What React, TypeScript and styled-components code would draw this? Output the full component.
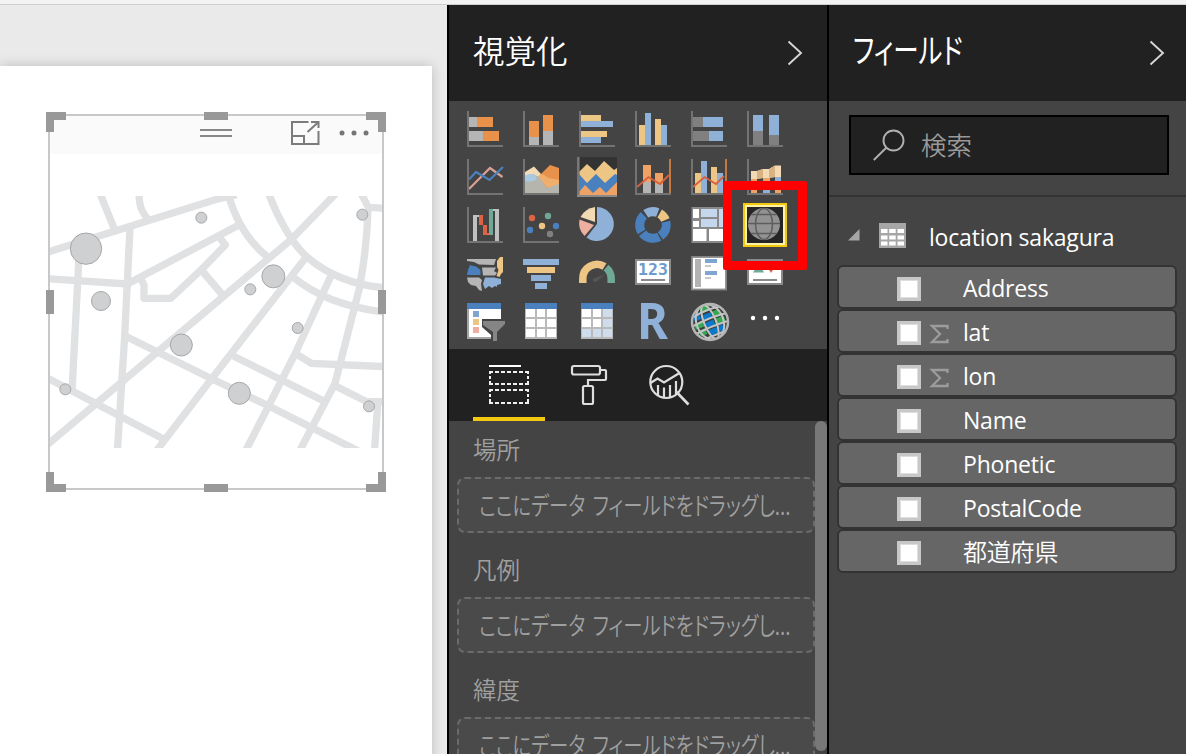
import React from "react";
import styled, { createGlobalStyle } from "styled-components";

const GlobalStyle = createGlobalStyle`
  * { box-sizing: border-box; }
  html, body { margin: 0; padding: 0; }
  body {
    width: 1186px;
    height: 754px;
    overflow: hidden;
    background: #eaeaea;
    font-family: "Open Sans", "Noto Sans CJK JP", sans-serif;
  }
  svg { display: block; overflow: visible; }
`;

const Shell = styled.div`
  display: flex;
  flex-direction: column;
  width: 1186px;
  height: 754px;
  overflow: hidden;
`;

const TopStrip = styled.div`
  flex: none;
  height: 5px;
  background: #f3f3f3;
  border-bottom: 1px solid #cfcfcf;
`;

const Main = styled.div`
  flex: 1;
  display: flex;
  min-height: 0;
`;

/* ---------- report canvas ---------- */

const CanvasArea = styled.div`
  width: 447px;
  flex: none;
  padding-top: 61px;
  background: #eaeaea;
  overflow: hidden;
`;

const ReportPage = styled.div`
  width: 432px;
  height: 720px;
  padding: 48px 0 0 48px;
  background: #fff;
  box-shadow: 0 0 12px rgba(0, 0, 0, 0.2);
`;

const Visual = styled.div`
  position: relative;
  width: 336px;
  height: 376px;
  border: 2px solid #c8c8c8;
  display: flex;
  flex-direction: column;
`;

const VisualHeader = styled.div`
  height: 38px;
  padding: 4px 0 0 150px;
  display: flex;
  align-items: flex-start;
  background: #fafafa;
`;

const Grip = styled.div`
  flex: none;
  width: 32px;
  height: 8px;
  margin: 9px 59px 0 0;
  border: solid #888;
  border-width: 2px 0;
`;

const MapArea = styled.div`
  margin-top: 42px;
  height: 252px;
  overflow: hidden;
`;

type HandlePos = { $v: "top" | "mid" | "bottom"; $h: "left" | "mid" | "right" };

const Handle = styled.div<HandlePos>`
  position: absolute;
  ${({ $v }) => ($v === "top" ? "top: -4px;" : $v === "bottom" ? "bottom: -4px;" : "top: 174px;")}
  ${({ $h }) => ($h === "left" ? "left: -4px;" : $h === "right" ? "right: -4px;" : "left: 154px;")}
  ${({ $v, $h }) =>
    $v === "mid"
      ? "width: 8px; height: 24px; background: #999;"
      : $h === "mid"
      ? "width: 24px; height: 8px; background: #999;"
      : `width: 20px; height: 20px; border: 0 solid #999; border-${$v}-width: 8px; border-${$h}-width: 8px;`}
`;

/* ---------- panes ---------- */

const Pane = styled.section<{ $width: number }>`
  flex: none;
  width: ${(p) => p.$width}px;
  border-left: 2px solid #000;
  background: #444;
  display: flex;
  flex-direction: column;
  overflow: hidden;
`;

const PaneHeader = styled.header<{ $right?: number }>`
  flex: none;
  height: 96px;
  padding: 0 ${(p) => p.$right ?? 21}px 4px 24px;
  display: flex;
  align-items: center;
  justify-content: space-between;
  background: #212121;
  color: #fff;
`;

const PaneTitle = styled.h2<{ $kana?: boolean }>`
  margin: 0;
  padding-bottom: 4px;
  font: 400 ${(p) => (p.$kana ? 34 : 32)}px/44px "Noto Sans CJK JP", sans-serif;
  font-weight: ${(p) => (p.$kana ? 400 : 350)};
  font-feature-settings: ${(p) => (p.$kana ? '"palt"' : "normal")};
  white-space: nowrap;
  transform: scaleX(${(p) => (p.$kana ? 0.75 : 0.985)});
  transform-origin: left;
`;

const ChevronBox = styled.div`
  padding-top: 4px;
`;

const VisualGrid = styled.div`
  flex: none;
  height: 248px;
  padding: 6px 0 0 14px;
  display: grid;
  grid-template-columns: repeat(6, 44px);
  grid-auto-rows: 44px;
  gap: 4px 12px;
  align-content: start;
`;

const VisualCell = styled.div`
  position: relative;
  padding: 2px;
`;

const SelectedFrame = styled.div`
  margin: -2px;
  width: 44px;
  height: 44px;
  border: 2px solid #f2c811;
  box-shadow: inset 0 0 0 2px #fff3a3;
  background: #252525;
`;

const RedMark = styled.div`
  position: absolute;
  z-index: 2;
  left: -20px;
  top: -22px;
  width: 84px;
  height: 89px;
  border: 9px solid #f00;
  border-radius: 2px;
`;

const Tabs = styled.div`
  flex: none;
  height: 72px;
  padding-left: 24px;
  display: flex;
  gap: 8px;
  background: #212121;
`;

const Tab = styled.div<{ $active?: boolean }>`
  width: 72px;
  padding-top: 16px;
  display: flex;
  justify-content: center;
  align-items: flex-start;
  border-bottom: 4px solid ${(p) => (p.$active ? "#f2c811" : "transparent")};
`;

const WellsArea = styled.div`
  flex: 1;
  min-height: 0;
  display: flex;
`;

const Wells = styled.div`
  width: 366px;
  padding-left: 8px;
  overflow: hidden;
`;

const Well = styled.div`
  height: 120px;
`;

const WellLabel = styled.div`
  height: 56px;
  padding-left: 16px;
  font: 350 23.5px/57px "Noto Sans CJK JP", sans-serif;
  color: #a0a0a0;
`;

const DropZone = styled.div`
  width: 358px;
  height: 56px;
  padding-left: 20px;
  border: 2px dashed #6b6b6b;
  border-radius: 8px;
  background: #4a4a4a;
`;

const DropText = styled.span`
  display: inline-block;
  font: 350 25px/50px "Noto Sans CJK JP", sans-serif;
  font-feature-settings: "palt";
  word-spacing: 4px;
  color: #a0a0a0;
  white-space: nowrap;
  transform: scaleX(0.774);
  transform-origin: left;
`;

const ScrollThumb = styled.div`
  width: 12px;
  height: 330px;
  border-radius: 6px;
  background: #787878;
`;

/* ---------- fields pane ---------- */

const SearchArea = styled.div`
  flex: none;
  height: 96px;
  padding: 14px 17px 0 20px;
  border-bottom: 2px solid #333;
`;

const SearchBox = styled.div`
  height: 60px;
  padding-left: 22px;
  display: flex;
  align-items: center;
  gap: 16px;
  border: 2px solid #000;
  background: #212121;
  color: #999;
`;

const SearchHint = styled.span`
  padding-bottom: 3px;
  font: 350 25.5px/50px "Noto Sans CJK JP", sans-serif;
`;

const TableRow = styled.div`
  flex: none;
  height: 68px;
  padding: 12px 0 0 19px;
  display: flex;
  align-items: center;
  color: #fff;
`;

const TableIconBox = styled.div`
  margin: 0 23px 0 19px;
  padding-bottom: 4px;
`;

const TriangleBox = styled.div`
  padding-bottom: 5px;
`;

const Latin = styled.span<{ $drop?: number; $cjk?: boolean }>`
  padding-top: ${(p) => p.$drop ?? 0}px;
  font: 400 ${(p) => (p.$cjk ? 24 : 23)}px/38px "Open Sans", "Noto Sans CJK JP", sans-serif;
  font-weight: ${(p) => (p.$cjk ? 350 : 400)};
  letter-spacing: -0.2px;
  white-space: nowrap;
`;

const FieldList = styled.div`
  padding: 0 9px 0 8px;
`;

const FieldRow = styled.div`
  height: 44px;
  padding-left: 58px;
  display: flex;
  align-items: center;
  border: 2px solid #333;
  border-radius: 6px;
  background: #666;
  color: #fff;
`;

const CheckBox = styled.span`
  width: 24px;
  height: 24px;
  margin-top: 4px;
  border: 3px solid #c8c8c8;
  background: #fff;
  box-shadow: inset 0 0 0 1px #dedede;
`;

const SigmaSlot = styled.span`
  width: 42px;
  padding: 6px 0 0 9px;
`;

/* ---------- icon drawings ---------- */

const O = "#e8914a";
const B = "#8fb1d8";
const DB = "#4a80bd";
const Y = "#edc584";
const G = "#b5b5b5";
const CR = "#f2dab4";

type Bar = [number, number, number, number, string];

const Bars = ({ items }: { items: Bar[] }) => (
  <>
    {items.map(([x1, y1, x2, y2, c], i) => (
      <rect key={i} x={x1} y={y1} width={x2 - x1} height={y2 - y1} fill={c} />
    ))}
  </>
);

const Axis = () => <path d="M3 2V37H38" fill="none" stroke="#737373" strokeWidth="2" />;

const Icon = ({ children }: { children: React.ReactNode }) => (
  <svg width="40" height="40" viewBox="0 0 40 40">
    {children}
  </svg>
);

const BarIcon = ({ items, children }: { items: Bar[]; children?: React.ReactNode }) => (
  <Icon>
    <Bars items={items} />
    {children}
    <Axis />
  </Icon>
);

const ring = (a0: number, a1: number, r = 13.3, cx = 20, cy = 20) => {
  const p = (a: number) => {
    const t = (a * Math.PI) / 180;
    return `${(cx + r * Math.sin(t)).toFixed(2)} ${(cy - r * Math.cos(t)).toFixed(2)}`;
  };
  return `M${p(a0)}A${r} ${r} 0 ${a1 - a0 > 180 ? 1 : 0} 1 ${p(a1)}`;
};

const TableGrid = ({ tint }: { tint?: boolean }) => {
  const cells: Bar[] = [];
  const ys = [[8, 16], [18, 26], [28, 36]];
  const xs = [[5, 14], [16, 24], [26, 35]];
  ys.forEach(([y1, y2], r) =>
    xs.forEach(([x1, x2], c) =>
      cells.push([x1, y1, x2, y2, tint && (c === 2 || r === 2) ? "#cfdcec" : "#fff"])
    )
  );
  return (
    <Icon>
      <rect x="4" y="2" width="32" height="36" fill="#b9b9b9" />
      <Bars items={cells} />
      <rect x="4" y="2" width="32" height="6" fill={DB} />
    </Icon>
  );
};

const GrayGlobe = () => (
  <svg width="40" height="40" viewBox="-2 -2 40 40">
    <circle cx="17" cy="17" r="16" fill="#929292" />
    <g fill="none" stroke="#5d5d5d" strokeWidth="1.500">
      <path d="M4 7.500H30M1 16.500H33M4 26.500H30" />
      <ellipse cx="17" cy="17" rx="8.500" ry="15.500" />
    </g>
  </svg>
);

const icons: React.ReactNode[] = [
  <BarIcon items={[[4, 8, 12, 18, G], [12, 8, 28, 18, O], [4, 22, 18, 32, G], [18, 22, 34, 32, O]]} />,
  <BarIcon items={[[8, 12, 18, 28, O], [8, 28, 18, 36, G], [22, 6, 32, 22, O], [22, 22, 32, 36, G]]} />,
  <BarIcon items={[[4, 6, 24, 12, Y], [4, 12, 36, 18, B], [4, 22, 30, 28, Y], [4, 28, 24, 34, B]]} />,
  <BarIcon items={[[6, 16, 12, 36, Y], [12, 4, 18, 36, B], [22, 10, 28, 36, Y], [28, 16, 34, 36, B]]} />,
  <BarIcon items={[[4, 8, 14, 18, "#808080"], [14, 8, 34, 18, B], [4, 22, 20, 32, "#808080"], [20, 22, 34, 32, B]]} />,
  <BarIcon items={[[8, 6, 18, 22, B], [8, 22, 18, 36, "#808080"], [24, 6, 34, 26, B], [24, 26, 34, 36, "#808080"]]} />,

  <BarIcon items={[]}>
    <path d="M4 32L25 11L37.5 20" fill="none" stroke="#d9a294" strokeWidth="2.2" />
    <path d="M4 22.5L11 15L24.5 23L38 10" fill="none" stroke="#4a80bd" strokeWidth="2.2" />
  </BarIcon>,
  <BarIcon items={[]}>
    <path d="M4 15L13 9.500L20 17L38 30V36H4Z" fill={CR} />
    <path d="M17 20L29 8L38 11V36H20Z" fill={O} />
    <path d="M16 20L21 17L28 21L38 23V28L27 31Z" fill="#efae6b" />
    <path d="M4 19L12 17L18 20L26 31L38 27V37H4Z" fill="#b5b5ae" />
    <path d="M4 18.500Q10 16 14 18L16 22Q11 26 4 24Z" fill="#a9c8e2" />
  </BarIcon>,
  <Icon>
    <rect width="40" height="40" fill="#333" />
    <path d="M2 15L10 7L18 14L27 4L37 13L40 11V30H2Z" fill={Y} />
    <path d="M2 17L10 26L19 17L28 26L38 17L40 18V38H2Z" fill={DB} />
    <path d="M2 35L8 28L16 36L23 30L29 36L40 25V38H2Z" fill="#efa265" />
    <path d="M1.300 0V40" stroke="#777" strokeWidth="2.600" />
    <path d="M0 39H40" stroke="#8a8a8a" strokeWidth="2" />
  </Icon>,
  <BarIcon items={[[10, 8, 18, 25, "#efa265"], [10, 25, 18, 36, G], [22, 16, 30, 27, "#efa265"], [22, 27, 30, 36, G], [36, 2, 38, 36, "#c27a42"]]}>
    <path d="M4 30L15.500 20L27 27L36 18" fill="none" stroke="#d8603f" strokeWidth="1.800" />
  </BarIcon>,
  <BarIcon items={[[6, 16, 12, 36, Y], [12, 4, 18, 36, B], [22, 10, 28, 36, Y], [28, 16, 34, 36, B], [36, 2, 38, 36, "#c27a42"]]}>
    <path d="M4 30L15.500 20L27 27L35 19" fill="none" stroke="#d8603f" strokeWidth="1.800" />
  </BarIcon>,
  <BarIcon items={[[6, 22, 12, 36, "#efa265"], [18, 25, 25, 36, B], [30, 27, 36, 36, "#efa265"], [30, 20, 36, 27, B], [18, 20, 25, 25, "#efa265"]]}>
    <path d="M6 14H12L18 12H24L30 8.500H36V20H30L24 21H18L12 22H6Z" fill={CR} />
    <path d="M12 14L18 12V21L12 22ZM24 12L30 8.500V20L24 21Z" fill="#d9b183" />
  </BarIcon>,

  <BarIcon items={[[8, 10, 12, 36, "#c0c0c0"], [12, 10, 14, 12, "#c0c0c0"], [14, 10, 18, 20, "#dc6343"], [18, 20, 22, 30, "#dc6343"], [22, 28, 24, 30, "#dc6343"], [24, 4, 28, 30, "#6fa896"], [28, 4, 30, 6, "#c0c0c0"], [30, 4, 34, 36, "#c0c0c0"]]} />,
  <BarIcon items={[]}>
    <circle cx="11" cy="13" r="3.200" fill="#dc6343" />
    <circle cx="27" cy="11" r="3.200" fill="#6fa896" />
    <circle cx="21" cy="21" r="3.200" fill={Y} />
    <circle cx="9" cy="25" r="3.200" fill={DB} />
    <circle cx="35" cy="21" r="3.200" fill={DB} />
    <circle cx="29" cy="29" r="3.200" fill="#808080" />
  </BarIcon>,
  <Icon>
    <path d="M20 2A17 17 0 1 1 9.500 32.500L20 19Z" fill={B} />
    <path d="M18 2V17L3.500 12Q8 3.500 18 2Z" fill={CR} />
    <path d="M2.500 14.500L17 20L7.500 31Q0.500 24 2.500 14.500Z" fill="#edafa0" />
  </Icon>,
  <Icon>
    <g fill="none" strokeWidth="9">
      <path d={ring(-33, 21)} stroke={B} />
      <path d={ring(30, 68)} stroke={Y} />
      <path d={ring(76, 146)} stroke={DB} />
      <path d={ring(152, 232)} stroke={DB} />
      <path d={ring(239, 317)} stroke={DB} />
    </g>
  </Icon>,
  <Icon>
    <rect x="2.500" y="2" width="35.500" height="36" fill="#8a8a8a" />
    <Bars items={[[4, 4, 10, 13, "#fff"], [4, 16, 10, 22, "#fff"], [12, 4, 28, 12, "#c5d7ec"], [12, 14, 28, 22, "#c5d7ec"], [30, 4, 36, 22, "#c5d7ec"], [4, 24, 17.5, 36, "#fff"], [20, 24, 36, 36, "#fff"]]} />
  </Icon>,
  <GrayGlobe />,

  <Icon>
    <path d="M2 6H31L29 12L14 11.500L9 9L2 8Z" fill={G} />
    <path d="M5 12L11 13.500L15.500 17V22H2L3 17Z" fill={DB} />
    <path d="M17 14.500H31L29 18L32 20L30 22.500H18Z" fill={G} />
    <path d="M2 24.500H14L17 27L16 31L17 38L14 37L11 33L6 32L3 29Z" fill={G} />
    <path d="M20 24.500H29L36 26V31L32 32V34L30 33L27 35L24 33L20 36L18 31Z" fill={B} />
    <path d="M35 4H38V19L36 21L34.500 24L31.500 23L33.500 17L32 14V8Z" fill={Y} />
  </Icon>,
  <Icon>
    <Bars items={[[2, 6, 38, 12, B], [6, 14, 34, 20, Y], [10, 22, 30, 28, B], [14, 30, 26, 36, B]]} />
  </Icon>,
  <Icon>
    <g fill="none" strokeWidth="7.500">
      <path d="M5.800 30V26A14.200 14.200 0 0 1 27.500 13.500" stroke={Y} />
      <path d="M29 14.600A14.200 14.200 0 0 1 34.200 26V30" stroke="#6fa896" />
    </g>
    <path d="M16 26L28 21.500L19 29Q15 29 16 26Z" fill="#565656" />
  </Icon>,
  <Icon>
    <rect x="3" y="7" width="34" height="24" fill="#fff" stroke="#8a8a8a" strokeWidth="2" />
    <text x="5" y="22" fontFamily="DejaVu Sans Mono" fontWeight="700" fontSize="16.500" fill="#6d9bcb" textLength="30">123</text>
    <rect x="8" y="26" width="24" height="2" fill="#8a8a8a" />
  </Icon>,
  <Icon>
    <rect x="3" y="4" width="34" height="32.500" fill="#fff" stroke="#8a8a8a" strokeWidth="1.800" />
    <Bars items={[[6, 6, 12, 34, "#b3b3b3"], [16, 6, 28, 10, "#7fa6d3"], [16, 12, 22, 14, "#c9c9c9"], [16, 18, 28, 22, "#7fa6d3"], [16, 24, 22, 26, "#c9c9c9"]]} />
  </Icon>,
  <Icon>
    <rect x="3" y="7" width="34" height="24" fill="#fff" stroke="#8a8a8a" strokeWidth="2" />
    <path d="M14 10L19 19.500H8Z" fill="#6fa896" />
    <path d="M21 12H31L26 20Z" fill="#dc6343" />
    <rect x="8" y="26" width="24" height="2" fill="#8a8a8a" />
  </Icon>,

  <Icon>
    <rect x="2" y="2" width="34" height="36" fill="#a5a5a5" />
    <rect x="4" y="8" width="32" height="28" fill="#fff" />
    <Bars items={[[2, 2, 36, 8, DB], [8, 10, 14, 16, "#7fa6d3"], [8, 18, 14, 24, Y], [8, 26, 14, 32, "#edafa0"]]} />
    <path d="M17 18H40V40H26V34L17 26Z" fill="#444" />
    <path d="M18 20H40V23L32 31V40H28V31L18 24Z" fill="#858585" />
  </Icon>,
  <TableGrid />,
  <TableGrid tint />,
  <Icon>
    <text x="4" y="38" fontFamily="Noto Sans" fontWeight="700" fontSize="50" fill={B} textLength="31" lengthAdjust="spacingAndGlyphs">R</text>
  </Icon>,
  <Icon>
    <circle cx="21" cy="21" r="18" fill="#3c3c3c" stroke="#b5b5b5" strokeWidth="2.500" />
    <clipPath id="globe"><circle cx="21" cy="21" r="17" /></clipPath>
    <g clipPath="url(#globe)">
      <g transform="rotate(-22 21 21)">
        <Bars items={[[16, 4, 26, 10, "#36a852"], [7, 8, 14, 15, "#0b78c8"], [16, 12, 25, 18, "#0b78c8"], [27, 12, 34, 18, "#36a852"], [5, 17, 14, 23, "#36a852"], [16, 20, 25, 26, "#0b78c8"], [27, 20, 36, 26, "#36a852"], [7, 25, 14, 31, "#36a852"], [16, 28, 25, 34, "#0b78c8"], [27, 28, 33, 34, "#0b78c8"]]} />
      </g>
      <g transform="rotate(-22 21 21)" fill="none" stroke="#c4c4c4" strokeWidth="2">
        <path d="M4 11Q21 7 38 11M2 19Q21 16 40 19M2 27Q21 25 40 27M6 35H36" />
        <ellipse cx="21" cy="21" rx="6" ry="18" />
        <ellipse cx="21" cy="21" rx="13.500" ry="18" />
      </g>
    </g>
  </Icon>,
  <Icon>
    <g fill="#fff">
      <circle cx="8" cy="17" r="2.200" />
      <circle cx="20" cy="17" r="2.200" />
      <circle cx="32" cy="17" r="2.200" />
    </g>
  </Icon>,
];

const SELECTED = 17;

const Chevron = () => (
  <ChevronBox>
    <svg width="20" height="28" viewBox="0 0 20 28">
      <path d="M2.500 2.500L15 14L2.500 25.500" fill="none" stroke="#d6d6d6" strokeWidth="1.900" />
    </svg>
  </ChevronBox>
);

const bubbles = [
  [138, 176, 47], [484, 83, 16.5], [183, 333, 28.5], [967, 74, 16.5], [700, 259, 34.5], [631, 298, 16.5],
  [773, 414, 16.5], [424, 465, 33], [598, 610, 33], [76, 598, 16.5], [987, 649, 16.5],
];

const MapPlaceholder = () => (
  <svg width="332" height="252" viewBox="30 18 996 756">
    <g fill="none" stroke="#e0e1e3" strokeWidth="22">
      <path d="M20 187L525 29L590 14" />
      <path d="M179 8L223 117" />
      <path d="M297 8C297 48 304 62 322 86" />
      <path d="M20 266L262 282L598 104" />
      <path d="M117 200L96 604" />
      <path d="M270 112L254 440L232 784" />
      <path d="M565 14C585 85 625 155 684 202" />
      <path d="M893 5L752 150L350 488L20 766" />
      <path d="M685 8C715 90 760 165 802 202C865 255 940 286 1035 293" />
      <path d="M797 203L515 566L345 788" />
      <path d="M760 262C830 318 910 350 1035 367" />
      <path d="M874 255L765 492L682 655L614 788" />
      <path d="M984 60C982 150 972 220 958 295L885 580L776 788" />
      <path d="M962 8L985 52L1035 55" />
      <path d="M260 440L515 566L680 645L965 788" />
      <path d="M580 498L850 632" />
      <path d="M765 490L815 520L1035 530" />
      <path d="M882 586L980 635H1035" />
      <path d="M1014 630L1003 788" />
      <path d="M20 563L372 748" />
      <path d="M538 142L556 165L485 238L392 325H312V284L302 266" strokeLinejoin="round" />
      <path d="M484 240L548 315" />
    </g>
    <g fill="#cfd0d2" stroke="#a6a7a9" strokeWidth="3">
      {bubbles.map(([x, y, r], i) => (
        <circle key={i} cx={x} cy={y} r={r} />
      ))}
    </g>
  </svg>
);

const Sigma = () => (
  <svg width="20" height="20" viewBox="0 0 20 20">
    <path d="M17.500 5V2H2L10 10L2 18H17.500V15" fill="none" stroke="#9c9c9c" strokeWidth="2.300" />
  </svg>
);

const fields: { name: string; sum?: boolean; cjk?: boolean }[] = [
  { name: "Address" },
  { name: "lat", sum: true },
  { name: "lon", sum: true },
  { name: "Name" },
  { name: "Phonetic" },
  { name: "PostalCode" },
  { name: "都道府県", cjk: true },
];

export default function App() {
  return (
    <Shell>
      <GlobalStyle />
      <TopStrip />
      <Main>
        <CanvasArea>
          <ReportPage>
            <Visual>
              <VisualHeader>
                <Grip />
                <svg width="82" height="28" viewBox="0 0 82 28">
                  <g fill="none" stroke="#7b7b7b" strokeWidth="2">
                    <path d="M17.500 2H1V24H27.500V11" />
                    <path d="M1 16H13V24" />
                    <path d="M16.500 12L27 2.500" />
                    <path d="M20 2H27.500V8" />
                  </g>
                  <g fill="#757575">
                    <circle cx="51" cy="13" r="2.500" />
                    <circle cx="63" cy="13" r="2.500" />
                    <circle cx="75" cy="13" r="2.500" />
                  </g>
                </svg>
              </VisualHeader>
              <MapArea>
                <MapPlaceholder />
              </MapArea>
              <Handle $v="top" $h="left" />
              <Handle $v="top" $h="mid" />
              <Handle $v="top" $h="right" />
              <Handle $v="mid" $h="left" />
              <Handle $v="mid" $h="right" />
              <Handle $v="bottom" $h="left" />
              <Handle $v="bottom" $h="mid" />
              <Handle $v="bottom" $h="right" />
            </Visual>
          </ReportPage>
        </CanvasArea>

        <Pane $width={380}>
          <PaneHeader>
            <PaneTitle>視覚化</PaneTitle>
            <Chevron />
          </PaneHeader>
          <VisualGrid>
            {icons.map((icon, i) => (
              <VisualCell key={i}>
                {i === SELECTED ? (
                  <>
                    <SelectedFrame>{icon}</SelectedFrame>
                    <RedMark />
                  </>
                ) : (
                  icon
                )}
              </VisualCell>
            ))}
          </VisualGrid>
          <Tabs>
            <Tab $active>
              <svg width="40" height="40" viewBox="0 0 40 40">
                <path d="M0 1H32" stroke="#fff" strokeWidth="2" />
                <g fill="none" stroke="#f0f0f0" strokeWidth="2" strokeDasharray="4 2">
                  <path d="M0 7H40M0 19H40M0 25H40M0 38H40" />
                  <path d="M1 6V20M39 6V20M1 24V39M39 24V39" strokeDasharray="3 2" />
                </g>
              </svg>
            </Tab>
            <Tab>
              <svg width="40" height="40" viewBox="0 0 40 40">
                <g fill="none" stroke="#dedede" strokeWidth="2.200">
                  <rect x="3" y="1" width="28" height="8.500" rx="2" />
                  <path d="M31 5H36Q37 5 37 6V14Q37 15 36 15H19V21" />
                  <rect x="14" y="21" width="10" height="18" rx="1.500" />
                </g>
              </svg>
            </Tab>
            <Tab>
              <svg width="40" height="40" viewBox="0 0 40 40">
                <g fill="none" stroke="#dedede" strokeWidth="2.200">
                  <circle cx="17.300" cy="17" r="16" />
                  <path d="M1.500 18L8.500 13.500L15 17.500L30.500 8" />
                  <path d="M9 20V30M15 22.500V32M21 20V32M27 16V29" />
                  <path d="M27.500 27L39.500 39.500" strokeWidth="2.600" />
                </g>
              </svg>
            </Tab>
          </Tabs>
          <WellsArea>
            <Wells>
              {["場所", "凡例", "緯度"].map((label) => (
                <Well key={label}>
                  <WellLabel>{label}</WellLabel>
                  <DropZone>
                    <DropText>ここにデータ フィールドをドラッグし...</DropText>
                  </DropZone>
                </Well>
              ))}
            </Wells>
            <ScrollThumb />
          </WellsArea>
        </Pane>

        <Pane $width={359}>
          <PaneHeader $right={18}>
            <PaneTitle $kana>フィールド</PaneTitle>
            <Chevron />
          </PaneHeader>
          <SearchArea>
            <SearchBox>
              <svg width="32" height="32" viewBox="0 0 32 32">
                <g fill="none" stroke="#b0b0b0" strokeWidth="1.900">
                  <circle cx="20.500" cy="11.500" r="10" />
                  <path d="M13.500 18.500L0.800 31" />
                </g>
              </svg>
              <SearchHint>検索</SearchHint>
            </SearchBox>
          </SearchArea>
          <TableRow>
            <TriangleBox>
              <svg width="12" height="12" viewBox="0 0 12 12">
                <path d="M11.500 0V11.500H0Z" fill="#a6a6a6" />
              </svg>
            </TriangleBox>
            <TableIconBox>
              <svg width="27" height="25" viewBox="0 0 27 25">
                <rect width="27" height="25" fill="#a6a6a6" />
                <Bars
                  items={[6, 12.5, 18.5].flatMap((y) =>
                    [2, 10.2, 18.5].map((x): Bar => [x, y, x + 6.5, y + 4, "#fff"])
                  )}
                />
              </svg>
            </TableIconBox>
            <Latin>location sakagura</Latin>
          </TableRow>
          <FieldList>
            {fields.map((f) => (
              <FieldRow key={f.name}>
                <CheckBox />
                <SigmaSlot>{f.sum && <Sigma />}</SigmaSlot>
                <Latin $drop={2} $cjk={f.cjk}>{f.name}</Latin>
              </FieldRow>
            ))}
          </FieldList>
        </Pane>
      </Main>
    </Shell>
  );
}
